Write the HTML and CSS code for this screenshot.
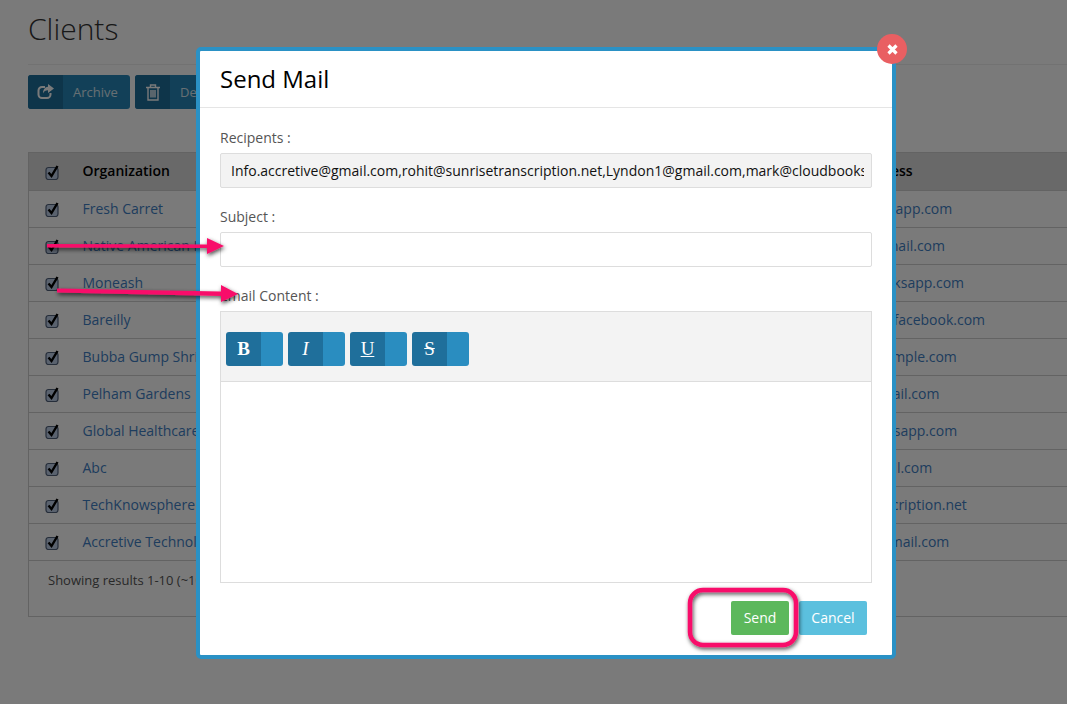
FILE: index.html
```html
<!DOCTYPE html>
<html lang="en">
<head>
    <meta charset="UTF-8">
    <title>Clients</title>
    <link rel="stylesheet" href="styles.css">
</head>
<body>
    <svg class="defs" width="0" height="0">
        <symbol id="tick" viewBox="0 0 14 16">
            <rect x="1" y="3.500" width="12" height="12" rx="2.500" fill="#bccde6" stroke="#50607a" stroke-width="1.200"/>
            <path d="M3.500 8.500l3 3.500L12.500 2" fill="none" stroke="#000" stroke-width="2.400"/>
        </symbol>
    </svg>

    <div class="page">
        <h1 class="page-title">Clients</h1>

        <div class="actions">
            <a class="action-btn"><span class="action-icon"><svg width="18" height="16" viewBox="0 0 18 16"><path d="M8 3H5a3.500 3.500 0 0 0-3.500 3.500v4A3.500 3.500 0 0 0 5 14h5a3.500 3.500 0 0 0 3.500-3.500V9" fill="none" stroke="currentColor" stroke-width="2"/><path d="M11 0l6 4.500-6 4.500V6.300C8.500 6.300 7 7.300 6 9.500 6 5.500 8 3 11 2.800z" fill="currentColor"/></svg></span><span class="action-label">Archive</span></a>
            <a class="action-btn"><span class="action-icon"><svg width="14" height="17" viewBox="0 0 14 17"><path d="M0 3.500h14M4.500 3.500V1h5v2.500M2 3.500V16h10V3.500M5 6v7.500M7 6v7.500M9 6v7.500" fill="none" stroke="currentColor" stroke-width="1.400"/></svg></span><span class="action-label">Delete</span></a>
        </div>

        <table class="clients">
            <thead>
                <tr><th class="check"><svg class="tick"><use href="#tick"/></svg></th><th class="org">Organization</th><th class="email">Email Address</th></tr>
            </thead>
            <tbody>
                <tr><td class="check"><svg class="tick"><use href="#tick"/></svg></td><td>Fresh Carret</td><td>sales@freshcarrettsapp.com</td></tr>
                <tr><td class="check"><svg class="tick"><use href="#tick"/></svg></td><td>Native American Indian</td><td>nativeamericas@gmail.com</td></tr>
                <tr><td class="check"><svg class="tick"><use href="#tick"/></svg></td><td>Moneash</td><td>monesh@cloudbooksapp.com</td></tr>
                <tr><td class="check"><svg class="tick"><use href="#tick"/></svg></td><td>Bareilly</td><td>bareilly.support.1@facebook.com</td></tr>
                <tr><td class="check"><svg class="tick"><use href="#tick"/></svg></td><td>Bubba Gump Shrimp</td><td>bubba.gumps@example.com</td></tr>
                <tr><td class="check"><svg class="tick"><use href="#tick"/></svg></td><td>Pelham Gardens</td><td>pelham.help.1@gmail.com</td></tr>
                <tr><td class="check"><svg class="tick"><use href="#tick"/></svg></td><td>Global Healthcare</td><td>globals@cloudbooksapp.com</td></tr>
                <tr><td class="check"><svg class="tick"><use href="#tick"/></svg></td><td>Abc</td><td>abc.client123@gmail.com</td></tr>
                <tr><td class="check"><svg class="tick"><use href="#tick"/></svg></td><td>TechKnowsphere</td><td>rohit@sunrisetranscription.net</td></tr>
                <tr><td class="check"><svg class="tick"><use href="#tick"/></svg></td><td>Accretive Technologies</td><td>accretive.info12@gmail.com</td></tr>
            </tbody>
            <tfoot>
                <tr><td colspan="3">Showing results 1-10 (~10)</td></tr>
            </tfoot>
        </table>
    </div>

    <div class="overlay"></div>

    <div class="modal">
        <div class="modal-head">Send Mail</div>
        <a class="modal-close"><svg width="11" height="11" viewBox="0 0 11 11"><path d="M1.500 1.500l8 8M9.500 1.500l-8 8" stroke="#fff" stroke-width="3.200"/></svg></a>
        <div class="modal-body">
            <label class="field-label">Recipents :</label>
            <div class="recipients"><span>Info.accretive@gmail.com,rohit@sunrisetranscription.net,Lyndon1@gmail.com,mark@cloudbooksapp.com</span></div>
            <label class="field-label">Subject :</label>
            <div class="subject"></div>
            <label class="field-label">Email Content :</label>
            <div class="editor">
                <div class="toolbar">
                    <a class="tool"><b class="glyph">B</b></a>
                    <a class="tool"><i class="glyph">I</i></a>
                    <a class="tool"><u class="glyph">U</u></a>
                    <a class="tool"><s class="glyph">S</s></a>
                </div>
                <div class="editor-area"></div>
            </div>
            <div class="modal-foot">
                <a class="btn btn-send">Send</a>
                <a class="btn btn-cancel">Cancel</a>
            </div>
        </div>
    </div>

    <!-- annotations drawn over the screenshot -->
    <svg class="marks" width="1067" height="704" viewBox="0 0 1067 704">
        <defs>
            <filter id="shadow" x="-20%" y="-50%" width="140%" height="200%"><feDropShadow dx="1" dy="2" stdDeviation="2" flood-color="#000" flood-opacity=".7"/></filter>
        </defs>
        <g filter="url(#shadow)" fill="#f8106a">
            <path d="M47 244L207 244.500V238L224 246 207 254V248L47 247.500z"/>
            <path d="M57 288.500L221 291.500V285L238 294 221 302V296L57 292.500z"/>
            <rect x="690" y="590" width="106" height="55" rx="13" fill="none" stroke="#f8106a" stroke-width="4.500"/>
        </g>
    </svg>
</body>
</html>
```

FILE: styles.css
```css
* {
    box-sizing: border-box;
}

body {
    margin: 0;
    height: 704px;
    overflow: hidden;
    background-color: #fff;
    color: #333;
    font-family: "Open Sans", sans-serif;
    font-size: 14px;
}

.defs {
    position: absolute;
}

.page {
    padding-left: 28px;
    overflow: hidden;
}

.page-title {
    margin: 0;
    height: 65px;
    padding-top: 9px;
    border-bottom: 1px solid #eee;
    font-size: 30px;
    font-weight: 300;
    line-height: 40px;
    color: #333;
}

.actions {
    display: flex;
    gap: 5px;
    margin-top: 10px;
}

.action-btn {
    display: flex;
    width: 102px;
    height: 34px;
    border-radius: 3px;
    background-color: #2787b9;
    color: #fff;
    overflow: hidden;
}

.action-icon {
    display: flex;
    align-items: center;
    justify-content: center;
    width: 35px;
    background-color: #1f6f9b;
}

.action-label {
    padding-left: 10px;
    font-size: 13px;
    line-height: 34px;
    color: #d8e8f0;
}

.clients {
    width: calc(100% + 2px);
    margin-top: 43px;
    border-collapse: collapse;
    border: 1px solid #d0d0d0;
    table-layout: fixed;
}

.clients th {
    height: 38px;
    padding: 0 0 2px;
    background-color: #dcdcdc;
    color: #000;
    font-weight: 600;
    text-align: left;
}

.clients td {
    height: 37px;
    padding: 0 0 2px;
    border-top: 1px solid #d0d0d0;
    color: #3f80c4;
}

.clients .check {
    width: 54px;
    padding: 0 0 0 16px;
}

.clients .org {
    width: 684px;
}

.clients .email {
    padding-left: 51px;
}

.tick {
    display: block;
    width: 14px;
    height: 16px;
}

.clients tbody td:last-child {
    white-space: nowrap;
}

.clients tfoot td {
    height: 56px;
    padding: 10px 0 0 19px;
    vertical-align: top;
    font-size: 13px;
    color: #555;
}

.overlay {
    position: absolute;
    top: 0;
    left: 0;
    width: 100%;
    height: 100%;
    background-color: rgba(0, 0, 0, 0.52);
}

.modal {
    position: absolute;
    top: 47px;
    left: 196px;
    width: 700px;
    height: 612px;
    border: 4px solid #2a91c5;
    border-radius: 5px;
    background-color: #fff;
}

.modal-head {
    height: 57px;
    padding-left: 20px;
    border-bottom: 1px solid #e5e5e5;
    font-size: 24px;
    line-height: 55px;
    color: #000;
}

.modal-close {
    position: absolute;
    top: -17px;
    right: -15px;
    display: flex;
    align-items: center;
    justify-content: center;
    width: 30px;
    height: 30px;
    border-radius: 50%;
    background-color: #e95f62;
}

.modal-body {
    padding: 20px 20px 0;
}

.field-label {
    display: block;
    height: 20px;
    line-height: 20px;
    color: #555;
}

.recipients {
    height: 35px;
    margin: 5px 0 19px;
    padding: 0 7px 0 10px;
    border: 1px solid #ddd;
    border-radius: 2px;
    background-color: #f3f3f3;
    color: #111;
    line-height: 34px;
    white-space: nowrap;
}

.recipients span {
    display: block;
    overflow: hidden;
}

.subject {
    height: 35px;
    margin: 5px 0 19px;
    border: 1px solid #ddd;
    border-radius: 2px;
    background-color: #fff;
}

.editor {
    height: 272px;
    margin-top: 5px;
    border: 1px solid #ddd;
}

.toolbar {
    display: flex;
    gap: 5px;
    height: 70px;
    padding: 20px 5px 0;
    border-bottom: 1px solid #ddd;
    background-color: #f3f3f3;
}

.tool {
    display: block;
    width: 57px;
    height: 34px;
    border-radius: 3px;
    background-color: #2a8dc0;
    background-image: linear-gradient(#1f6f9b, #1f6f9b);
    background-repeat: no-repeat;
    background-size: 35px 100%;
    text-align: center;
}

.glyph {
    display: block;
    width: 35px;
    color: #fff;
    font-family: "Liberation Serif", serif;
    font-size: 19px;
    line-height: 34px;
}

.modal-foot {
    display: flex;
    justify-content: flex-end;
    gap: 10px;
    margin-top: 18px;
    padding-right: 5px;
}

.btn {
    height: 34px;
    border-radius: 2px;
    color: #fff;
    text-align: center;
    line-height: 34px;
}

.btn-send {
    width: 58px;
    background-color: #5cb85c;
}

.btn-cancel {
    width: 68px;
    background-color: #5bc0de;
}

.marks {
    position: absolute;
    top: 0;
    left: 0;
}
```
